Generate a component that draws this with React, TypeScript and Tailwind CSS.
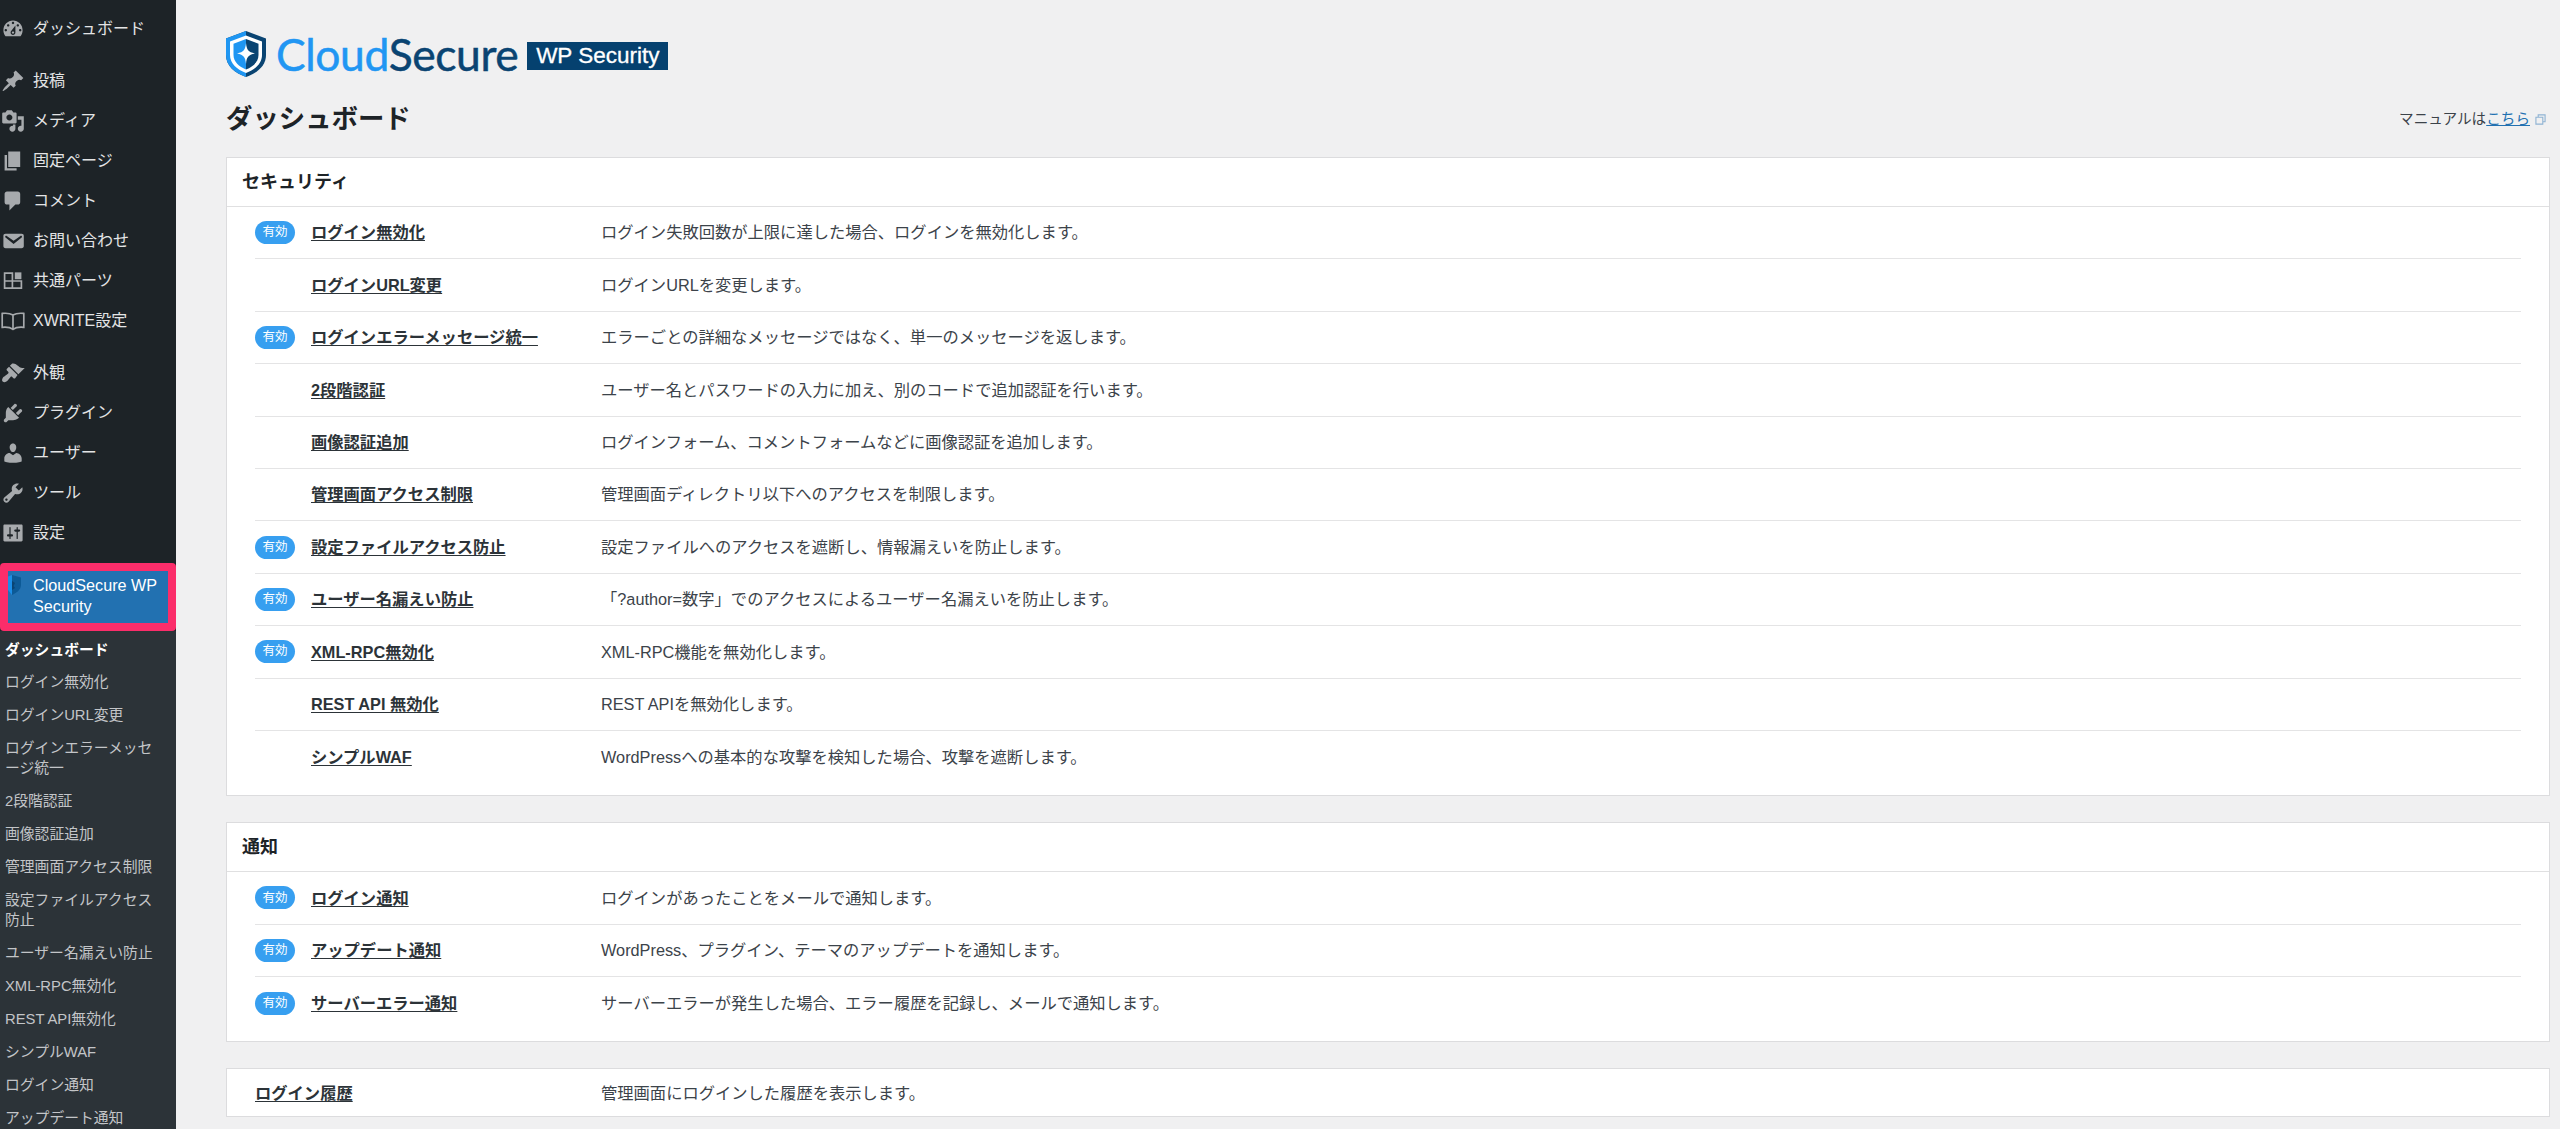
import React from "react";

type MenuItem = { label: string; d?: string; custom?: React.ReactNode; mt?: boolean };

const font = "[font-family:'Liberation_Sans','Noto_Sans_CJK_JP',sans-serif]";

const menu: MenuItem[] = [
  { label: "ダッシュボード", d: "M3.76 16h12.48c1.1-1.37 1.76-3.11 1.76-5 0-4.42-3.58-8-8-8s-8 3.58-8 8c0 1.89.66 3.63 1.76 5zM10 4c.55 0 1 .45 1 1s-.45 1-1 1-1-.45-1-1 .45-1 1-1zM6 6c.55 0 1 .45 1 1s-.45 1-1 1-1-.45-1-1 .45-1 1-1zm8 0c.55 0 1 .45 1 1s-.45 1-1 1-1-.45-1-1 .45-1 1-1zm-5.37 5.55L12 7v6c0 1.1-.9 2-2 2s-2-.9-2-2c0-.57.24-1.08.63-1.45zM4 10c.55 0 1 .45 1 1s-.45 1-1 1-1-.45-1-1 .45-1 1-1zm12 0c.55 0 1 .45 1 1s-.45 1-1 1-1-.45-1-1 .45-1 1-1zm-5 3c0-.55-.45-1-1-1s-1 .45-1 1 .45 1 1 1 1-.45 1-1z" },
  { label: "投稿", mt: true, d: "M10.44 3.02l1.82-1.82 6.36 6.35-1.83 1.82c-1.05-.68-2.48-.57-3.41.36l-.75.75c-.92.93-1.04 2.35-.35 3.41l-1.83 1.82-2.41-2.41-2.8 2.79c-.42.42-3.38 2.71-3.8 2.29s1.86-3.39 2.28-3.81l2.79-2.79L4.1 9.36l1.83-1.82c1.05.69 2.48.57 3.4-.36l.75-.75c.93-.92 1.05-2.35.36-3.41z" },
  { label: "メディア", d: "M13 11V4c0-.55-.45-1-1-1h-1.67L9 1H5L3.67 3H2c-.55 0-1 .45-1 1v7c0 .55.45 1 1 1h10c.55 0 1-.45 1-1zM7 4.5c1.38 0 2.5 1.12 2.5 2.5S8.38 9.5 7 9.5 4.5 8.38 4.5 7 5.62 4.5 7 4.5zM14 6h5v10.5c0 1.38-1.12 2.5-2.5 2.5S14 17.88 14 16.5s1.12-2.5 2.5-2.5c.17 0 .34.02.5.05V9h-3V6zm-4 8.05V13h2v3.5c0 1.38-1.12 2.5-2.5 2.5S7 17.88 7 16.5 8.12 14 9.5 14c.17 0 .34.02.5.05z" },
  { label: "固定ページ", d: "M6 15V2h10v13H6zm-1 1h8v2H3V5h2v11z" },
  { label: "コメント", d: "M5 2h9c1.1 0 2 .9 2 2v7c0 1.1-.9 2-2 2h-2l-5 5v-5H5c-1.1 0-2-.9-2-2V4c0-1.1.9-2 2-2z" },
  { label: "お問い合わせ", d: "M3.87 4h13.25C18.37 4 19 4.59 19 5.79v8.42c0 1.19-.63 1.79-1.88 1.79H3.87c-1.25 0-1.88-.6-1.88-1.79V5.79c0-1.2.63-1.79 1.88-1.79zm6.62 8.6l6.74-5.53c.24-.2.43-.66.13-1.07-.29-.41-.82-.42-1.17-.17l-5.7 3.86L4.8 5.83c-.35-.25-.88-.24-1.17.17-.3.41-.11.87.13 1.07z" },
  {
    label: "共通パーツ",
    custom: (
      <>
        <path d="M3 3.500h6.500V16H3zM3 10h14v6H9.500" fill="none" stroke="currentColor" strokeWidth="1.4" />
        <path d="M11.500 2.800H17V8.500h-5.500z" />
      </>
    ),
  },
  {
    label: "XWRITE設定",
    custom: (
      <path d="M10 5C8 3.800 5 3.300 1 3.700v11.600c4-.4 7 .2 9 1.700 2-1.500 5-2.100 9-1.700V3.700C15 3.300 12 3.800 10 5zM10 5v12" fill="none" stroke="currentColor" strokeWidth="1.400" />
    ),
  },
  { label: "外観", mt: true, d: "M14.48 11.06L7.41 3.99l1.5-1.5c.5-.56 2.3-.47 3.51.32 1.21.8 1.43 1.28 2.91 2.1 1.18.64 2.45 1.26 4.45.85zm-.71.71L6.7 4.7 4.93 6.47c-.39.39-.39 1.02 0 1.41l1.06 1.06c.39.39.39 1.03 0 1.42-.6.6-1.43 1.11-2.21 1.69-.35.26-.7.53-1.01.84C1.43 13.23.28 15.94 1.4 17.06c.84.84 2.6.84 4.01-.56.31-.31.58-.66.84-1.01.58-.78 1.09-1.61 1.69-2.21.39-.39 1.03-.39 1.42 0l1.06 1.06c.39.39 1.02.39 1.41 0z" },
  { label: "プラグイン", d: "M13.11 4.36L9.87 7.6 8 5.73l3.24-3.24c.35-.34 1.05-.2 1.56.32.52.51.66 1.21.31 1.55zm-8 1.77l.91-1.12 9.01 9.01-1.19.84c-.71.71-2.63 1.16-3.82 1.16H6.14L4.9 17.26c-.59.59-1.54.59-2.12 0-.59-.58-.59-1.53 0-2.12l1.24-1.24v-3.88c0-1.13.4-3.19 1.09-3.89zm7.26 3.97l3.24-3.24c.34-.35 1.04-.21 1.55.31.52.51.66 1.21.31 1.55l-3.24 3.25z" },
  { label: "ユーザー", d: "M10 9.25c-2.27 0-2.73-3.44-2.73-3.44C7 4.02 7.82 2 9.97 2c2.16 0 2.98 2.02 2.71 3.81 0 0-.41 3.44-2.68 3.44zm0 2.57L12.72 10c2.39 0 4.52 2.33 4.52 4.53v2.49s-3.65 1.13-7.24 1.13c-3.65 0-7.24-1.13-7.24-1.13v-2.49c0-2.25 1.94-4.48 4.47-4.48z" },
  { label: "ツール", d: "M16.68 9.77c-1.34 1.34-3.3 1.67-4.95.99l-5.41 6.52c-.99.99-2.59.99-3.58 0s-.99-2.59 0-3.57l6.52-5.42c-.68-1.65-.35-3.61.99-4.95 1.28-1.28 3.12-1.62 4.72-1.06l-2.89 2.89 2.82 2.82 2.86-2.87c.53 1.58.18 3.39-1.08 4.65zM3.81 16.21c.4.39 1.04.39 1.43 0 .4-.4.4-1.04 0-1.43-.39-.4-1.03-.4-1.43 0-.39.39-.39 1.03 0 1.43z" },
  { label: "設定", d: "M18 16V4c0-.55-.45-1-1-1H3c-.55 0-1 .45-1 1v12c0 .55.45 1 1 1h14c.55 0 1-.45 1-1zM8 11h1c.55 0 1 .45 1 1s-.45 1-1 1H8v1.5c0 .28-.22.5-.5.5s-.5-.22-.5-.5V13H6c-.55 0-1-.45-1-1s.45-1 1-1h1V5.5c0-.28.22-.5.5-.5s.5.22.5.5V11zm5-2h-1c-.55 0-1-.45-1-1s.45-1 1-1h1V5.5c0-.28.22-.5.5-.5s.5.22.5.5V7h1c.55 0 1 .45 1 1s-.45 1-1 1h-1v5.5c0 .28-.22.5-.5.5s-.5-.22-.5-.5V9z" },
];

const submenu = [
  "ログイン無効化",
  "ログインURL変更",
  "ログインエラーメッセージ統一",
  "2段階認証",
  "画像認証追加",
  "管理画面アクセス制限",
  "設定ファイルアクセス防止",
  "ユーザー名漏えい防止",
  "XML-RPC無効化",
  "REST API無効化",
  "シンプルWAF",
  "ログイン通知",
  "アップデート通知",
];

type Row = { name: string; desc: string; on?: boolean };

const security: Row[] = [
  { name: "ログイン無効化", desc: "ログイン失敗回数が上限に達した場合、ログインを無効化します。", on: true },
  { name: "ログインURL変更", desc: "ログインURLを変更します。" },
  { name: "ログインエラーメッセージ統一", desc: "エラーごとの詳細なメッセージではなく、単一のメッセージを返します。", on: true },
  { name: "2段階認証", desc: "ユーザー名とパスワードの入力に加え、別のコードで追加認証を行います。" },
  { name: "画像認証追加", desc: "ログインフォーム、コメントフォームなどに画像認証を追加します。" },
  { name: "管理画面アクセス制限", desc: "管理画面ディレクトリ以下へのアクセスを制限します。" },
  { name: "設定ファイルアクセス防止", desc: "設定ファイルへのアクセスを遮断し、情報漏えいを防止します。", on: true },
  { name: "ユーザー名漏えい防止", desc: "「?author=数字」でのアクセスによるユーザー名漏えいを防止します。", on: true },
  { name: "XML-RPC無効化", desc: "XML-RPC機能を無効化します。", on: true },
  { name: "REST API 無効化", desc: "REST APIを無効化します。" },
  { name: "シンプルWAF", desc: "WordPressへの基本的な攻撃を検知した場合、攻撃を遮断します。" },
];

const notices: Row[] = [
  { name: "ログイン通知", desc: "ログインがあったことをメールで通知します。", on: true },
  { name: "アップデート通知", desc: "WordPress、プラグイン、テーマのアップデートを通知します。", on: true },
  { name: "サーバーエラー通知", desc: "サーバーエラーが発生した場合、エラー履歴を記録し、メールで通知します。", on: true },
];

function FeatureRow({ row, last }: { row: Row; last: boolean }) {
  return (
    <div className={`flex h-[52.4px] items-center ${last ? "" : "border-b border-[#e4e4e5]"}`}>
      <div className="w-[56px] shrink-0">
        {row.on && (
          <span className="flex h-[23px] w-[40px] items-center justify-center rounded-full bg-[#379ff0] text-[12.5px] text-white">
            有効
          </span>
        )}
      </div>
      <a className="w-[290px] shrink-0 text-[16.3px] font-bold text-[#2c3338] underline underline-offset-2">{row.name}</a>
      <p className="text-[16.3px] text-[#3c434a]">{row.desc}</p>
    </div>
  );
}

function Section({ title, rows }: { title: string; rows: Row[] }) {
  return (
    <section className="border border-[#dcdcde] bg-white pb-[12px]">
      <h2 className="flex h-[49px] items-center border-b border-[#e0e0e1] pl-[15px] text-[18px] font-bold text-[#1d2327]">{title}</h2>
      <div className="mx-[28px]">
        {rows.map((row, i) => (
          <FeatureRow key={row.name} row={row} last={i === rows.length - 1} />
        ))}
      </div>
    </section>
  );
}

function Logo() {
  return (
    <div className="flex items-center">
      <svg viewBox="0 0 40 46" className="h-[46px] w-[40px]">
        <path d="M20 0L40 7.500V24C40 35 31 42 20 46C9 42 0 35 0 24V7.500Z" fill="#0a4472" />
        <path d="M20 0L0 7.500V24C0 35 9 42 20 46Z" fill="#1f96f2" />
        <path d="M20 4.500L36 10.500V24C36 32.500 29 38.500 20 42C11 38.500 4 32.500 4 24V10.500Z" fill="#fff" />
        <path d="M20 8L32.500 12.700V24C32.500 31 27 35.500 20 38.500Z" fill="#0a4472" />
        <path d="M20 8L7.500 12.700V24C7.500 31 13 35.500 20 38.500Z" fill="#1f96f2" />
        <path d="M20 12C20.800 19 22 20.800 29 22.500C22 24 20.800 26 20 33C19.200 26 18 24 11 22.500C18 20.800 19.200 19 20 12Z" fill="#fff" />
      </svg>
      <span className="ml-[10px] text-[44.4px] leading-none tracking-[-0.4px] [-webkit-text-stroke:0.5px] [font-family:Lato,sans-serif]">
        <span className="text-[#2196f3]">Cloud</span>
        <span className="text-[#0a4472]">Secure</span>
      </span>
      <span className="ml-[9px] mt-[4px] flex h-[28px] w-[141px] items-center justify-center bg-[#05416f] text-[22.5px] text-white [-webkit-text-stroke:0.3px]">
        WP Security
      </span>
    </div>
  );
}

export default function App() {
  return (
    <div className={`flex h-[1129px] overflow-hidden bg-[#f0f0f1] ${font}`}>
      <aside className="h-full w-[176px] shrink-0 overflow-hidden bg-[#1d2327]">
        <nav className="pt-[9px]">
          {menu.map((item) => (
            <div key={item.label} className={`flex h-[40px] items-center text-[16px] text-[#e3e4e5] ${item.mt ? "mt-[12px]" : ""}`}>
              <svg viewBox="0 0 20 20" fill="currentColor" className="ml-[1px] h-[24px] w-[24px] shrink-0 text-[#a7aaad]">
                {item.custom ?? <path d={item.d} />}
              </svg>
              <span className="ml-[8px]">{item.label}</span>
            </div>
          ))}
        </nav>
        <div className="mt-[10px] rounded-[4px] border-[8px] border-[#fb2d6a] bg-[#2271b1]">
          <div className="relative flex h-[52px] items-center pb-[2px] pl-[25px] text-[16.2px] leading-[21px] text-white">
            <svg viewBox="0 0 13 20" className="absolute left-0 top-[4px] h-[20px] w-[13px]">
              <path d="M4 0L13 2.500V10C13 15 8 18 4 20Z" fill="#0d5a96" />
              <path d="M4 0L0 1.500V15L4 20Z" fill="#1d8ee6" />
              <path d="M4 6L7 8L5.500 11L7 13L4 15Z" fill="#0a4472" />
            </svg>
            <span>CloudSecure WP Security</span>
          </div>
        </div>
        <div className="h-full bg-[#2c3338] pt-[5.5px] text-[14.8px] leading-[20px] text-[#c3c5c8]">
          <div className="pb-[6px] pl-[5px] pt-[3px] font-bold text-white">ダッシュボード</div>
          {submenu.map((s) => (
            <div key={s} className="py-[6.5px] pl-[5px] pr-[14px]">{s}</div>
          ))}
        </div>
      </aside>
      <main className="flex-1 pl-[50px] pr-[10px] pt-[31px]">
        <Logo />
        <div className="mt-[18px] flex h-[50px] items-center justify-between">
          <h1 className="text-[26.4px] font-bold text-[#1d2327]">ダッシュボード</h1>
          <div className="flex items-center pr-[4px] text-[14.6px] text-[#3c434a]">
            マニュアルは
            <a className="text-[#2271b1] underline">こちら</a>
            <svg viewBox="0 0 12 12" className="ml-[5px] h-[11px] w-[11px] text-[#8fb3d3]" fill="none" stroke="currentColor" strokeWidth="1.2">
              <path d="M1 3.500h7.500V11H1zM3.500 3.500V1H11v7.500H8.500" />
            </svg>
          </div>
        </div>
        <div className="mt-[12px] flex flex-col gap-[26px]">
          <Section title="セキュリティ" rows={security} />
          <Section title="通知" rows={notices} />
          <section className="flex h-[49px] items-center border border-[#dcdcde] bg-white pl-[28px]">
            <a className="w-[346px] shrink-0 text-[16.3px] font-bold text-[#2c3338] underline underline-offset-2">ログイン履歴</a>
            <p className="text-[16.3px] text-[#3c434a]">管理画面にログインした履歴を表示します。</p>
          </section>
        </div>
      </main>
    </div>
  );
}
